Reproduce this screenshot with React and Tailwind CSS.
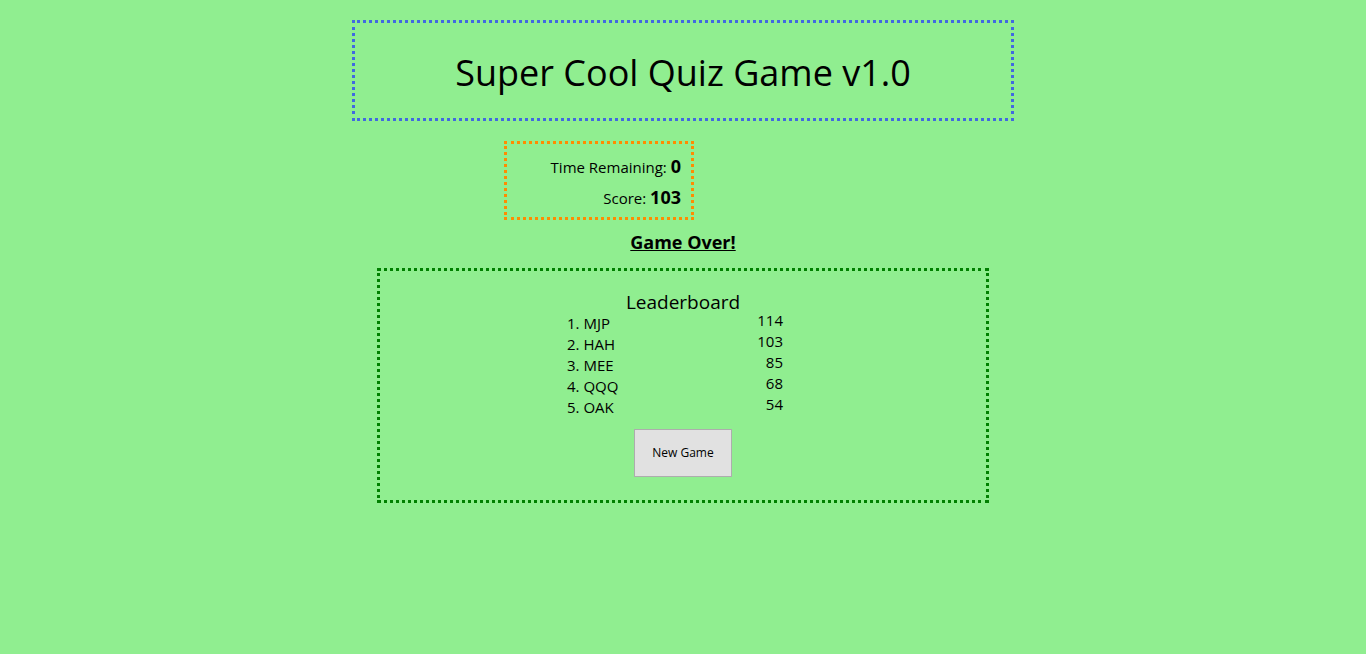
import React from 'react';

const scores = [
    { rank: 1, name: 'MJP', score: 114 },
    { rank: 2, name: 'HAH', score: 103 },
    { rank: 3, name: 'MEE', score: 85 },
    { rank: 4, name: 'QQQ', score: 68 },
    { rank: 5, name: 'OAK', score: 54 },
];

export default function App() {
    return (
        <div
            className="min-h-screen bg-[#90EE90] pt-5 text-black"
            style={{ fontFamily: '"Open Sans", "Noto Sans", sans-serif' }}
        >
            {/* title */}
            <div className="mx-auto w-[662px] h-[101px] border-[3px] border-dotted border-[#4169E1] flex items-center justify-center">
                <h1 className="text-[36px] leading-none mt-[4px]">Super Cool Quiz Game v1.0</h1>
            </div>

            {/* timer + score */}
            <div className="ml-[504px] mt-5 w-[190px] h-[79px] border-[3px] border-dotted border-[#FF8C00] flex flex-col justify-center gap-[6px] pr-[10px] pt-[3px] text-right">
                <div className="text-[15px] leading-6">
                    Time Remaining: <span className="text-[18px] font-bold">0</span>
                </div>
                <div className="text-[15px] leading-6">
                    Score: <span className="text-[18px] font-bold">103</span>
                </div>
            </div>

            <div className="mt-[10px] text-center leading-6">
                <span className="text-[18px] font-bold underline">Game Over!</span>
            </div>

            {/* leaderboard */}
            <div className="mx-auto mt-[13px] w-[612px] h-[235px] border-[3px] border-dotted border-[#008000] flex flex-col items-center pt-[19px]">
                <div className="text-[19px] leading-6">Leaderboard</div>
                <div className="w-[216px] mr-[16px] -mt-[1px] text-[15px]">
                    {scores.map((s) => (
                        <div key={s.rank} className="flex justify-between h-[21px] leading-[21px]">
                            <span>{s.rank}. {s.name}</span>
                            <span className="-mt-[3px]">{s.score}</span>
                        </div>
                    ))}
                </div>
                <button className="mt-[11px] w-[98px] h-[48px] bg-[#e1e1e1] border border-[#adadad] text-[12px]">
                    New Game
                </button>
            </div>
        </div>
    );
}
